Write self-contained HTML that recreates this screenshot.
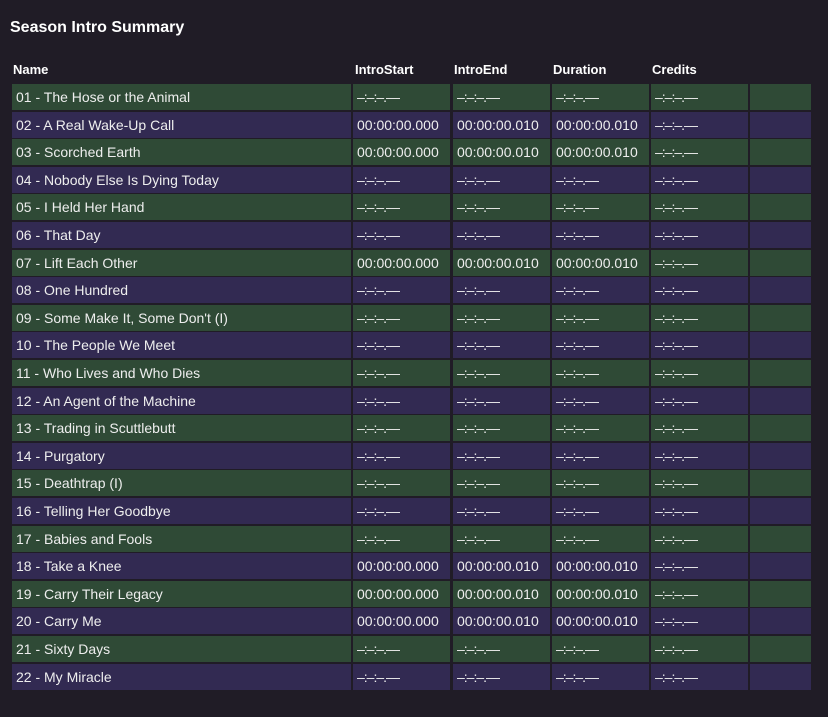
<!DOCTYPE html><html><head><style>
body{margin:0;background:#201c26;width:828px;height:717px;overflow:hidden;font-family:"Liberation Sans",sans-serif;color:#fff;position:relative}
h1{position:absolute;left:10px;top:19px;margin:0;font-size:16px;font-weight:bold}
.h{position:absolute;top:62px;font-size:13px;font-weight:bold}
.c{position:absolute;height:26px;line-height:26px;font-size:14px;color:#eee;padding-left:4px;box-sizing:border-box;white-space:nowrap}
.g{background:#2f4a36}.p{background:#322a52}
.d{letter-spacing:-1px}
</style></head><body>
<h1>Season Intro Summary</h1>
<div class="h" style="left:13px">Name</div><div class="h" style="left:355px">IntroStart</div><div class="h" style="left:454px">IntroEnd</div><div class="h" style="left:553px">Duration</div><div class="h" style="left:652px">Credits</div>
<div id="b"></div>
<script>
var n=["01 - The Hose or the Animal","02 - A Real Wake-Up Call","03 - Scorched Earth","04 - Nobody Else Is Dying Today","05 - I Held Her Hand","06 - That Day","07 - Lift Each Other","08 - One Hundred","09 - Some Make It, Some Don't (I)","10 - The People We Meet","11 - Who Lives and Who Dies","12 - An Agent of the Machine","13 - Trading in Scuttlebutt","14 - Purgatory","15 - Deathtrap (I)","16 - Telling Her Goodbye","17 - Babies and Fools","18 - Take a Knee","19 - Carry Their Legacy","20 - Carry Me","21 - Sixty Days","22 - My Miracle"];
var t=[1,2,6,17,18,19];var X=[[12,339],[353,97],[453,97],[552,97],[651,97],[750,61]];var h='';
n.forEach(function(s,i){var y=Math.round(84+i*27.6),cl=i%2?'p':'g';
var v=t.indexOf(i)>=0?[s,'00:00:00.000','00:00:00.010','00:00:00.010','–:–:–.—','']:[s,'–:–:–.—','–:–:–.—','–:–:–.—','–:–:–.—',''];
X.forEach(function(c,j){h+='<div class="c '+cl+(v[j][0]=='–'?' d':'')+'" style="left:'+c[0]+'px;top:'+y+'px;width:'+c[1]+'px">'+v[j]+'</div>';});});
document.getElementById('b').innerHTML=h;
</script>
</body></html>
